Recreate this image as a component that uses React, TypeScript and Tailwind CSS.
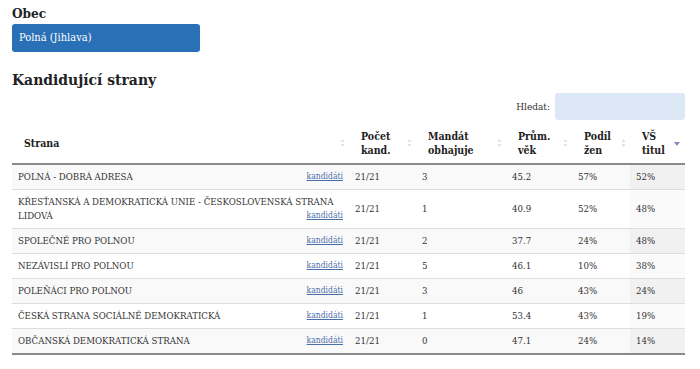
import React from "react";

type Row = { name: string; pocet: string; mandat: string; vek: string; zen: string; vs: string };

const rows: Row[] = [
  { name: "POLNÁ - DOBRÁ ADRESA", pocet: "21/21", mandat: "3", vek: "45.2", zen: "57%", vs: "52%" },
  { name: "KŘESŤANSKÁ A DEMOKRATICKÁ UNIE - ČESKOSLOVENSKÁ STRANA LIDOVÁ", pocet: "21/21", mandat: "1", vek: "40.9", zen: "52%", vs: "48%" },
  { name: "SPOLEČNĚ PRO POLNOU", pocet: "21/21", mandat: "2", vek: "37.7", zen: "24%", vs: "48%" },
  { name: "NEZÁVISLÍ PRO POLNOU", pocet: "21/21", mandat: "5", vek: "46.1", zen: "10%", vs: "38%" },
  { name: "POLEŇÁCI PRO POLNOU", pocet: "21/21", mandat: "3", vek: "46", zen: "43%", vs: "24%" },
  { name: "ČESKÁ STRANA SOCIÁLNĚ DEMOKRATICKÁ", pocet: "21/21", mandat: "1", vek: "53.4", zen: "43%", vs: "19%" },
  { name: "OBČANSKÁ DEMOKRATICKÁ STRANA", pocet: "21/21", mandat: "0", vek: "47.1", zen: "24%", vs: "14%" },
];

function SortBoth() {
  return (
    <svg width="5" height="9" viewBox="0 0 5 9" className="absolute right-[4px] top-1/2 -translate-y-1/2">
      <path d="M2.5 0.5 L4.5 3.5 L0.5 3.5 Z" fill="#e2e2e2" />
      <path d="M2.5 8.5 L4.5 5.5 L0.5 5.5 Z" fill="#e2e2e2" />
    </svg>
  );
}

function SortDesc() {
  return (
    <svg width="6" height="5" viewBox="0 0 6 5" className="absolute right-[5px] top-1/2 -translate-y-[1px]">
      <path d="M0 0 L6 0 L3 4 Z" fill="#8a86c8" />
    </svg>
  );
}

export default function App() {
  const font = { fontFamily: "'DejaVu Serif', 'Liberation Serif', serif", fontStretch: "condensed" as const };
  return (
    <div className="w-[700px] h-[369px] bg-white text-[#333]" style={font}>
      <div className="pl-[12px] pr-[15px] pt-[4px]">
        <div className="text-[13.5px] font-bold leading-[18px] text-[#222]">Obec</div>
        <div className="mt-[2px] w-[188px] h-[28px] rounded-[3px] bg-[#2a70b6] flex items-center pl-[7px] text-white text-[11px]">
          Polná (Jihlava)
        </div>
        <div className="mt-[18px] text-[15.5px] font-bold leading-[20px] text-[#222]">Kandidující strany</div>
        <div className="flex justify-end items-center mt-[3px] gap-[5px]">
          <span className="text-[10px] text-[#333]">Hledat:</span>
          <div className="w-[130px] h-[27px] rounded-[3px] bg-[#dde8f6]" />
        </div>
        <table className="table-fixed border-collapse w-[673px] mt-[3px] text-[9.6px]">
          <colgroup>
            <col className="w-[337px]" />
            <col className="w-[67px]" />
            <col className="w-[90px]" />
            <col className="w-[66px]" />
            <col className="w-[58px]" />
            <col className="w-[55px]" />
          </colgroup>
          <thead>
            <tr className="border-b-2 border-[#8a8a8a] h-[41px]">
              {[
                ["Strana"],
                ["Počet", "kand."],
                ["Mandát", "obhajuje"],
                ["Prům.", "věk"],
                ["Podíl", "žen"],
                ["VŠ", "titul"],
              ].map((lines, i) => (
                <th key={i} className="relative text-left font-bold text-[#222] text-[10.5px] pl-[12px] leading-[14px] align-middle">
                  {lines.map((l, j) => (
                    <div key={j}>{l}</div>
                  ))}
                  {i === 5 ? <SortDesc /> : <SortBoth />}
                </th>
              ))}
            </tr>
          </thead>
          <tbody>
            {rows.map((r, i) => {
              const odd = i % 2 === 0;
              return (
                <tr key={i} className={`border-b border-[#dddddd] ${odd ? "bg-[#f9f9f9]" : "bg-white"} ${i === rows.length - 1 ? "border-b-2 border-b-[#8a8a8a]" : ""}`}>
                  <td className="pl-[6px] pr-[6px] py-[5px] leading-[14px] align-middle">
                    {r.name}
                    <a href="#" className="float-right text-[8.5px] leading-[12px] text-[#4a6ea8] underline">kandidáti</a>
                  </td>
                  <td className="pl-[6px] align-middle">{r.pocet}</td>
                  <td className="pl-[6px] align-middle">{r.mandat}</td>
                  <td className="pl-[6px] align-middle">{r.vek}</td>
                  <td className="pl-[6px] align-middle">{r.zen}</td>
                  <td className={`pl-[6px] align-middle ${odd ? "bg-[#f1f1f1]" : "bg-[#fafafa]"}`}>{r.vs}</td>
                </tr>
              );
            })}
          </tbody>
        </table>
      </div>
    </div>
  );
}
